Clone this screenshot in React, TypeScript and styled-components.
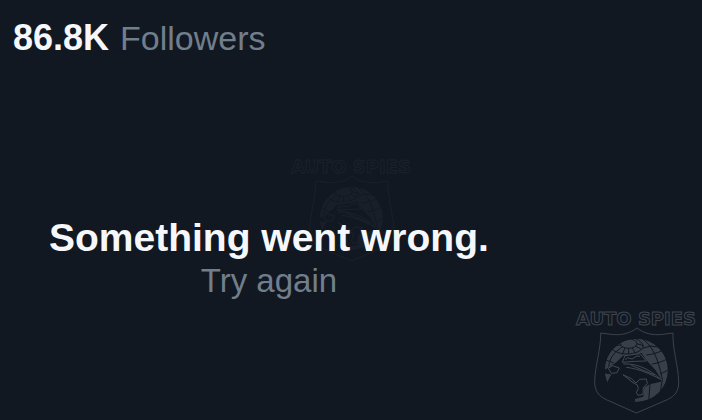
import React from "react";
import styled, { createGlobalStyle } from "styled-components";

const GlobalStyle = createGlobalStyle`
  * { box-sizing: border-box; }
  body { margin: 0; background: #111821; }
`;

const Page = styled.main`
  position: relative;
  isolation: isolate;
  min-height: 100vh;
  overflow: hidden;
  padding: 16px 13px;
  background: #111821;
  color: #f5f7fa;
  font-family: "Liberation Sans", Arial, sans-serif;
`;

const FollowersLink = styled.a`
  display: flex;
  align-items: baseline;
  gap: 11px;
  color: #717e8c;
  font-size: 34px;
  line-height: 44px;
  text-decoration: none;
`;

const Count = styled.strong`
  color: #f5f7fa;
  font-size: 36px;
  font-weight: 700;
`;

const Message = styled.section`
  display: flex;
  flex-direction: column;
  align-items: center;
  width: max-content;
  margin: 152px 0 0 36px;
`;

const Title = styled.h1`
  margin: 0;
  font-size: 39px;
  font-weight: 700;
  line-height: 52px;
`;

const RetryButton = styled.button`
  border: 0;
  padding: 0;
  background: none;
  color: #717e8c;
  font: inherit;
  font-size: 33px;
  line-height: 34px;
  cursor: pointer;
`;

const Watermark = styled.div<{ $place: "center" | "corner" }>`
  position: absolute;
  z-index: -1;
  display: flex;
  flex-direction: column;
  align-items: center;
  pointer-events: none;
  ${({ $place }) =>
    $place === "center"
      ? "inset: 0; justify-content: center; opacity: 0.2;"
      : "right: 6px; bottom: 6px;"}
`;

const Brand = styled.span`
  color: #111821;
  font-family: "DejaVu Sans", sans-serif;
  font-size: 18px;
  font-weight: 700;
  line-height: 16px;
  white-space: nowrap;
  -webkit-text-stroke: 1px #3e454e;
`;

const Shield = styled.svg`
  display: block;
  width: 87px;
  height: 87px;
`;

function Emblem({ place }: { place: "center" | "corner" }) {
  const clip = `globe-${place}`;
  return (
    <Watermark $place={place} aria-hidden="true">
      <Brand>AUTO SPIES</Brand>
      <Shield viewBox="90 82 261 261" fill="none">
        <defs>
          <clipPath id={clip}>
            <circle cx="220" cy="212" r="95" />
          </clipPath>
        </defs>
        <path
          d="M222 85C202 101 174 108 144 104L113 100C114 147 96 200 95 245C95 276 108 289 130 300L220 340L313 300C335 289 348 276 347 245C346 200 328 147 330 100L299 104C269 108 242 101 222 85Z"
          stroke="#3c434c"
          strokeWidth="3"
        />
        <g clipPath={`url(#${clip})`}>
          <circle cx="220" cy="212" r="95" fill="#383f48" />
          <g stroke="#111821" strokeWidth="3">
            <ellipse cx="197" cy="132" rx="25" ry="14" />
            <path d="M143 142C154 166 215 172 239 146C244 137 234 124 217 117" />
            <path d="M235 115C268 137 286 176 298 240M126 180L152 190" />
            <path d="M174 135L146 141M178 141L157 158M186 145L178 164M197 147V166M208 145L217 161M217 139L236 149M221 132L242 138" />
            <path d="M239 146L262 139L284 142M250 166C264 165 280 160 296 154M267 193C284 191 301 185 316 176M292 222C301 219 310 215 318 208" />
            <path d="M157 158C145 170 139 184 137 201M143 142L128 169M261 251L257 307M298 240L291 284" />
          </g>
          <path
            d="M111 219L145 198L160 188L180 168L236 160L250 181L279 213L294 238L294 246L260 254L244 263L241 291L216 298L217 318L165 318L140 284L130 252L145 224L120 221Z"
            fill="#111821"
          />
        </g>
        <g stroke="#424952" strokeWidth="3" strokeLinejoin="round">
          <path d="M178 188L186 168L231 162L250 184L215 185ZM187 181L193 174L207 178L222 169L231 170" />
          <path d="M136 206L148 198L169 205L162 219L145 221Z" />
          <path d="M181 193C215 191 254 203 293 239C263 224 228 207 190 203M205 197L275 226" />
          <path d="M180 225L205 237L219 250L230 239L250 238L253 252L241 263L240 284L225 287L220 279L226 267L223 256L207 247Z" />
        </g>
      </Shield>
    </Watermark>
  );
}

export default function App() {
  return (
    <>
      <GlobalStyle />
      <Page>
        <FollowersLink href="#followers">
          <Count>86.8K</Count>
          <span>Followers</span>
        </FollowersLink>
        <Message role="alert">
          <Title>Something went wrong.</Title>
          <RetryButton type="button">Try again</RetryButton>
        </Message>
        <Emblem place="center" />
        <Emblem place="corner" />
      </Page>
    </>
  );
}
